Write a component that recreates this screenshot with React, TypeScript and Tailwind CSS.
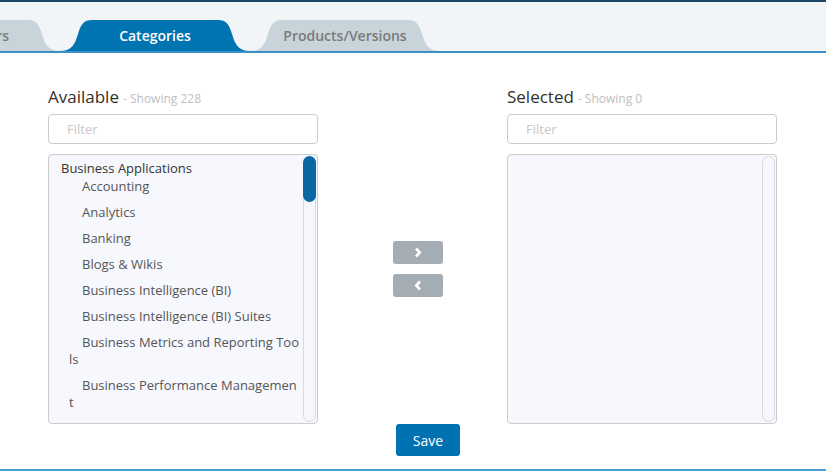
import React from 'react';

const available = [
  'Accounting',
  'Analytics',
  'Banking',
  'Blogs & Wikis',
  'Business Intelligence (BI)',
  'Business Intelligence (BI) Suites',
  'Business Metrics and Reporting Tools',
  'Business Performance Management',
  'Business Process Management',
];

const Tab: React.FC<{ label: string; active?: boolean; className?: string; labelClass?: string }> = ({ label, active, className, labelClass }) => (
  <div className={`relative w-[190px] h-[31px] flex items-center justify-center ${className ?? ''}`}>
    <svg className="absolute inset-0" width="190" height="31" viewBox="0 0 190 31">
      <path
        d="M0,31 C12,31 15,24 18,14 C21,4 24,0 32,0 L158,0 C166,0 169,4 172,14 C175,24 178,31 190,31 Z"
        fill={active ? '#0073b1' : '#c8d3da'}
      />
    </svg>
    <span className={`relative whitespace-nowrap text-[14px] font-semibold ${active ? 'text-white' : 'text-[#7b7b7b]'} ${labelClass ?? ''}`}>
      {label}
    </span>
  </div>
);

const Scrollbar: React.FC<{ thumb?: boolean }> = ({ thumb }) => (
  <div className="absolute right-[1px] top-[1px] bottom-[1px] w-[13px] rounded-full border border-[#d9dadf] bg-[#f6f7fc]">
    {thumb && <div className="-m-px h-[46px] rounded-full bg-[#0a69a5]" />}
  </div>
);

const Column: React.FC<{ title: string; count: number; children?: React.ReactNode; thumb?: boolean }> = ({ title, count, children, thumb }) => (
  <div className="w-[270px]">
    <div className="h-[20px] flex items-baseline">
      <span className="text-[17px] text-[#33302c]">{title}</span>
      <span className="ml-1 text-[12px] text-[#c0c0c0]">- Showing {count}</span>
    </div>
    <input
      type="text"
      placeholder="Filter"
      className="mt-[10px] w-full h-[30px] rounded border border-[#cccccc] pl-[18px] text-[13px] placeholder:text-[#c8c8c8] outline-none"
    />
    <div className="relative mt-[10px] h-[270px] rounded border border-[#cccccc] bg-[#f7f8fd] overflow-hidden">
      {children}
      <Scrollbar thumb={thumb} />
    </div>
  </div>
);

const App: React.FC = () => {
  return (
    <div className="w-[826px] h-[472px] bg-white overflow-hidden font-['Open_Sans',sans-serif]">
      {/* Header */}
      <div className="h-[2px] bg-[#1d4968]" />
      <div className="h-[51px] bg-[#f1f5f8] border-b-2 border-[#3c8fc5] pt-[18px] flex items-end overflow-hidden">
        <Tab label="Manufacturers" className="-ml-[130px] shrink-0" labelClass="mr-[12px]" />
        <Tab label="Categories" active className="shrink-0" />
        <Tab label="Products/Versions" className="shrink-0" />
      </div>

      {/* Body */}
      <div className="px-[48px] pt-[31px] pb-[13px] border-b-2 border-[#4a9fd2]">
        <div className="flex">
          <Column title="Available" count={228} thumb>
            <div className="pt-[5px] pl-[12px] pr-[17px] text-[13px] leading-[17px]">
              <div className="font-medium text-[#333333] h-[18px]">Business Applications</div>
              {available.map((item) => (
                <div key={item} className="pl-[8px] indent-[13px] pb-[9px] text-[#555555] break-all">
                  {item}
                </div>
              ))}
            </div>
          </Column>

          <div className="w-[189px] pt-[157px] pl-[75px] flex flex-col gap-[10px]">
            <button className="w-[50px] h-[23px] rounded-[3px] bg-[#a4acb4] flex items-center justify-center">
              <svg width="8" height="11" viewBox="0 0 8 11">
                <path d="M2,1.5 L5.8,5.5 L2,9.5" stroke="white" strokeWidth="2.6" fill="none" />
              </svg>
            </button>
            <button className="w-[50px] h-[23px] rounded-[3px] bg-[#a4acb4] flex items-center justify-center">
              <svg width="8" height="11" viewBox="0 0 8 11">
                <path d="M6,1.5 L2.2,5.5 L6,9.5" stroke="white" strokeWidth="2.6" fill="none" />
              </svg>
            </button>
          </div>

          <Column title="Selected" count={0} />
        </div>

        <div className="ml-[348px]">
          <button className="w-[64px] h-[32px] rounded-[3px] bg-[#0072b1] text-white text-[14px]">Save</button>
        </div>
      </div>
    </div>
  );
};

export default App;
